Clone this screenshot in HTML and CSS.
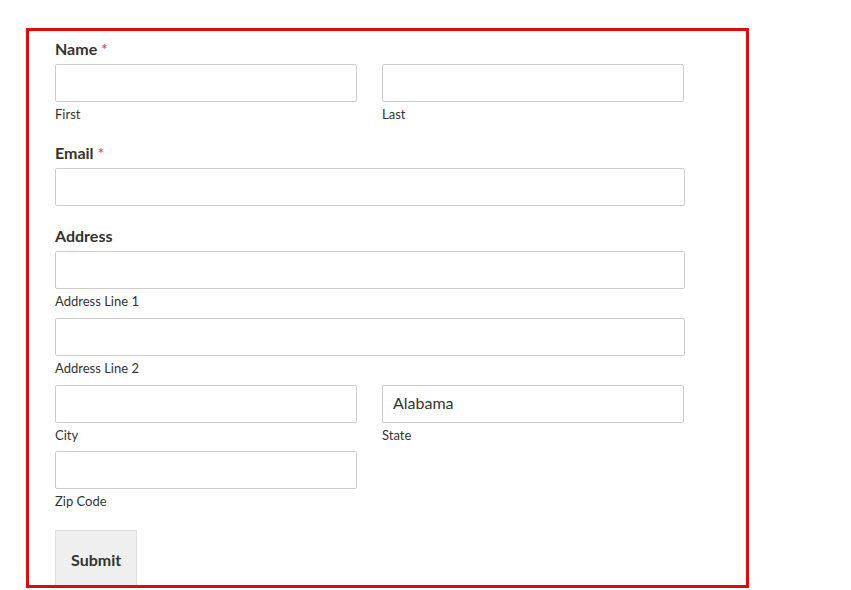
FILE: index.html
```html
<!DOCTYPE html>
<html lang="en">
<head>
    <meta charset="UTF-8">
    <meta name="viewport" content="width=device-width, initial-scale=1.0">
    <title>Contact Form</title>
    <link rel="stylesheet" href="styles.css">
</head>
<body>
    <form class="form-box">
        <div class="field">
            <label class="field-label">Name <span class="required">*</span></label>
            <div class="row">
                <div class="col">
                    <input class="text-input" type="text">
                    <div class="sub-label">First</div>
                </div>
                <div class="col">
                    <input class="text-input" type="text">
                    <div class="sub-label">Last</div>
                </div>
            </div>
        </div>

        <div class="field">
            <label class="field-label">Email <span class="required">*</span></label>
            <input class="text-input full" type="email">
        </div>

        <div class="field">
            <label class="field-label">Address</label>
            <div class="part">
                <input class="text-input full" type="text">
                <div class="sub-label">Address Line 1</div>
            </div>
            <div class="part">
                <input class="text-input full" type="text">
                <div class="sub-label">Address Line 2</div>
            </div>
            <div class="row part">
                <div class="col">
                    <input class="text-input" type="text">
                    <div class="sub-label">City</div>
                </div>
                <div class="col">
                    <select class="text-input select-input">
                        <option>Alabama</option>
                    </select>
                    <div class="sub-label">State</div>
                </div>
            </div>
            <div class="row part zip">
                <div class="col">
                    <input class="text-input" type="text">
                    <div class="sub-label">Zip Code</div>
                </div>
            </div>
        </div>

        <button class="submit-button" type="button">Submit</button>
    </form>
</body>
</html>
```

FILE: styles.css
```css
body {
    margin: 0;
    font-family: Lato, "Liberation Sans", sans-serif;
    color: #333;
    background: #fff;
}
.form-box {
    box-sizing: border-box;
    width: 723px;
    height: 560px;
    margin: 28px 0 0 26px;
    padding: 8px 26px 0 26px;
    border: 3px solid #dd0a0a;
    overflow: hidden;
}
.field {
    margin-bottom: 20px;
}
.field-label {
    display: block;
    font-size: 16px;
    font-weight: bold;
    line-height: 20px;
    margin-bottom: 5px;
    color: #333;
}
.required {
    color: #d63638;
    font-weight: normal;
}
.row {
    display: flex;
    gap: 25px;
}
.col {
    width: 302px;
}
.part + .part {
    margin-top: 8px;
}
.part.zip {
    margin-top: 7px;
}
.text-input {
    display: block;
    box-sizing: border-box;
    width: 302px;
    height: 38px;
    margin: 0;
    padding: 0 10px;
    border: 1px solid #ccc;
    border-radius: 2px;
    background: #fff;
    font-family: Lato, "Liberation Sans", sans-serif;
    font-size: 16px;
    color: #333;
}
.text-input.full {
    width: 630px;
}
.select-input {
    -webkit-appearance: none;
    appearance: none;
    padding-bottom: 3px;
}
.sub-label {
    margin-top: 3px;
    font-size: 13px;
    line-height: 18px;
    color: #333;
}
.submit-button {
    margin-top: 0;
    padding: 19px 15px 21px;
    border: 1px solid #ddd;
    border-radius: 0;
    background: #efefef;
    font-family: Lato, "Liberation Sans", sans-serif;
    font-size: 16px;
    font-weight: bold;
    line-height: 20px;
    color: #333;
    cursor: pointer;
}
```
